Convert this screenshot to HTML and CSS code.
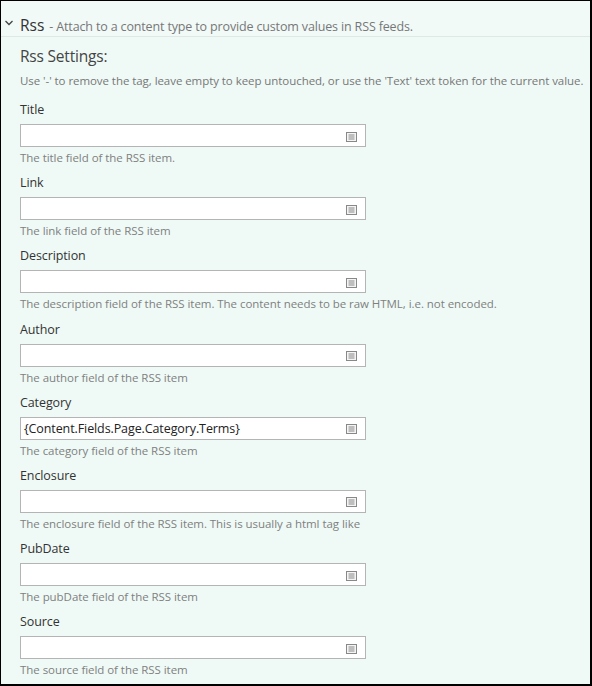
FILE: index.html
```html
<!DOCTYPE html>
<html>
<head>
<meta charset="utf-8">
<link rel="stylesheet" href="styles.css">
</head>
<body>
<div class="panel">
  <div class="header">
    <svg class="chev" width="10" height="8" viewBox="0 0 10 8"><path d="M1.5 2 L5 5.5 L8.5 2" fill="none" stroke="#444" stroke-width="1.3"/></svg>
    <span class="name">Rss</span>
    <span class="desc">- Attach to a content type to provide custom values in RSS feeds.</span>
  </div>
  <div class="body">
    <div class="section-title">Rss Settings:</div>
    <div class="hint">Use '-' to remove the tag, leave empty to keep untouched, or use the 'Text' text token for the current value.</div>

    <div class="field">
      <div class="label">Title</div>
      <div class="input"><span class="value"></span><svg class="icon" width="11" height="10" viewBox="0 0 11 10"><rect x="0.5" y="0.5" width="10" height="9" fill="#f4f4f4" stroke="#888"/><path d="M2.5 3h6M2.5 5h6M2.5 7h6" stroke="#888" stroke-width="1"/></svg></div>
      <div class="help">The title field of the RSS item.</div>
    </div>
    <div class="field">
      <div class="label">Link</div>
      <div class="input"><span class="value"></span><svg class="icon" width="11" height="10" viewBox="0 0 11 10"><rect x="0.5" y="0.5" width="10" height="9" fill="#f4f4f4" stroke="#888"/><path d="M2.5 3h6M2.5 5h6M2.5 7h6" stroke="#888" stroke-width="1"/></svg></div>
      <div class="help">The link field of the RSS item</div>
    </div>
    <div class="field">
      <div class="label">Description</div>
      <div class="input"><span class="value"></span><svg class="icon" width="11" height="10" viewBox="0 0 11 10"><rect x="0.5" y="0.5" width="10" height="9" fill="#f4f4f4" stroke="#888"/><path d="M2.5 3h6M2.5 5h6M2.5 7h6" stroke="#888" stroke-width="1"/></svg></div>
      <div class="help">The description field of the RSS item. The content needs to be raw HTML, i.e. not encoded.</div>
    </div>
    <div class="field">
      <div class="label">Author</div>
      <div class="input"><span class="value"></span><svg class="icon" width="11" height="10" viewBox="0 0 11 10"><rect x="0.5" y="0.5" width="10" height="9" fill="#f4f4f4" stroke="#888"/><path d="M2.5 3h6M2.5 5h6M2.5 7h6" stroke="#888" stroke-width="1"/></svg></div>
      <div class="help">The author field of the RSS item</div>
    </div>
    <div class="field">
      <div class="label">Category</div>
      <div class="input"><span class="value">{Content.Fields.Page.Category.Terms}</span><svg class="icon" width="11" height="10" viewBox="0 0 11 10"><rect x="0.5" y="0.5" width="10" height="9" fill="#f4f4f4" stroke="#888"/><path d="M2.5 3h6M2.5 5h6M2.5 7h6" stroke="#888" stroke-width="1"/></svg></div>
      <div class="help">The category field of the RSS item</div>
    </div>
    <div class="field">
      <div class="label">Enclosure</div>
      <div class="input"><span class="value"></span><svg class="icon" width="11" height="10" viewBox="0 0 11 10"><rect x="0.5" y="0.5" width="10" height="9" fill="#f4f4f4" stroke="#888"/><path d="M2.5 3h6M2.5 5h6M2.5 7h6" stroke="#888" stroke-width="1"/></svg></div>
      <div class="help">The enclosure field of the RSS item. This is usually a html tag like</div>
    </div>
    <div class="field">
      <div class="label">PubDate</div>
      <div class="input"><span class="value"></span><svg class="icon" width="11" height="10" viewBox="0 0 11 10"><rect x="0.5" y="0.5" width="10" height="9" fill="#f4f4f4" stroke="#888"/><path d="M2.5 3h6M2.5 5h6M2.5 7h6" stroke="#888" stroke-width="1"/></svg></div>
      <div class="help">The pubDate field of the RSS item</div>
    </div>
    <div class="field">
      <div class="label">Source</div>
      <div class="input"><span class="value"></span><svg class="icon" width="11" height="10" viewBox="0 0 11 10"><rect x="0.5" y="0.5" width="10" height="9" fill="#f4f4f4" stroke="#888"/><path d="M2.5 3h6M2.5 5h6M2.5 7h6" stroke="#888" stroke-width="1"/></svg></div>
      <div class="help">The source field of the RSS item</div>
    </div>
  </div>
</div>
</body>
</html>
```
FILE: styles.css
```css
* { box-sizing: border-box; }
html, body { margin: 0; padding: 0; }
body {
  font-family: "Open Sans", "Noto Sans", sans-serif;
  width: 592px;
  height: 686px;
  overflow: hidden;
}
.panel {
  width: 592px;
  height: 686px;
  border-style: solid;
  border-color: #000;
  border-width: 1px 2px 2px 1px;
  background: #effaf6;
  overflow: hidden;
}
.header {
  display: flex;
  align-items: baseline;
  height: 36px;
  padding: 13px 0 0 3px;
  border-bottom: 1px solid #dfe8e4;
  background: #f1faf7;
}
.chev { margin-right: 6px; align-self: center; margin-top: -5px; }
.name {
  font-size: 15.5px;
  color: #333;
  margin-right: 5px;
}
.desc {
  font-size: 12.5px;
  color: #777;
  letter-spacing: -0.15px;
}
.body {
  padding: 8px 0 0 19px;
}
.section-title {
  font-size: 15.5px;
  color: #444;
  line-height: 22px;
  letter-spacing: -0.2px;
}
.hint {
  font-size: 11.5px;
  color: #777;
  line-height: 18px;
  margin-top: 5px;
  letter-spacing: -0.06px;
  white-space: nowrap;
}
.field {
  height: 73.2px;
}
.hint + .field { margin-top: 11px; }
.label {
  font-size: 12.5px;
  color: #333;
  line-height: 18px;
  letter-spacing: -0.1px;
}
.input {
  display: flex;
  align-items: center;
  width: 346px;
  height: 23px;
  margin-top: 5px;
  background: #fff;
  border: 1px solid #b4b4b4;
  padding: 0 8px 0 3px;
}
.value {
  flex: 1;
  font-size: 12.5px;
  color: #222;
  letter-spacing: -0.1px;
}
.icon { flex: none; margin-top: 2px; }
.help {
  font-size: 11.5px;
  color: #808080;
  line-height: 18px;
  margin-top: 2px;
  letter-spacing: -0.05px;
  white-space: nowrap;
}
```
